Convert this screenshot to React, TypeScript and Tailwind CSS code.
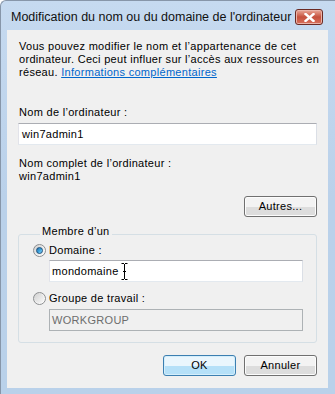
const font = { fontFamily: '"Liberation Sans", Arial, sans-serif' };

function Radio({ checked }: { checked?: boolean }) {
  return (
    <span className="relative flex h-[13px] w-[13px] flex-none items-center justify-center rounded-full border border-[#8c8e90] bg-gradient-to-br from-[#c8c8c8] via-[#f2f2f2] to-[#ffffff]">
      <span className="h-[9px] w-[9px] rounded-full bg-gradient-to-br from-[#d4d4d4] to-[#f8f8f8]">
        {checked && (
          <span className="m-[1px] block h-[7px] w-[7px] rounded-full border border-[#1a4f7c] bg-gradient-to-br from-[#2a6fa6] via-[#3aa3de] to-[#8fdcff]" />
        )}
      </span>
    </span>
  );
}

function Btn({ label, primary }: { label: string; primary?: boolean }) {
  return (
    <button
      type="button"
      className={
        primary
          ? "h-[21px] w-[73px] rounded-[3px] border border-[#3c7fb1] bg-gradient-to-b from-[#eaf6fd] from-50% to-[#b5e0f8] to-50% text-[11px] leading-[13px] tracking-[0.3px] text-black shadow-[inset_0_0_0_1px_#d4eefb]"
          : "h-[21px] w-[73px] rounded-[3px] border border-[#707070] bg-gradient-to-b from-[#f3f3f3] from-50% to-[#dddddd] to-50% text-[11px] leading-[13px] tracking-[0.3px] text-black shadow-[inset_0_0_0_1px_#fcfcfc]"
      }
    >
      {label}
    </button>
  );
}

export default function App() {
  return (
    <div className="h-[394px] w-[335px] overflow-hidden bg-white" style={font}>
      <div className="flex h-full w-full flex-col rounded-tl-[6px] border-l border-t border-[#8796a9] bg-gradient-to-b from-[#c6daf0] via-[#bad1ea] to-[#b9d1ea]">
        {/* title bar */}
        <div className="flex h-[29px] flex-none items-center pl-[10px] pr-[12px] pt-[3px]">
          <span className="text-[12.5px] leading-[15px] text-[#111]">
            Modification du nom ou du domaine de l'ordinateur
          </span>
          <span className="ml-auto flex h-[16px] w-[28px] items-center justify-center rounded-[3px] border border-[#6b2a24] bg-gradient-to-b from-[#e9a99b] via-[#c5503d] to-[#d8705c] shadow-[inset_0_0_0_1px_#eab3a8]">
            <svg width="11" height="9" viewBox="0 0 11 9" aria-hidden="true">
              <path
                d="M1.5 1L9.5 8M9.5 1L1.5 8"
                stroke="#ffffff"
                strokeWidth="2.4"
                strokeLinecap="square"
              />
            </svg>
          </span>
        </div>

        {/* client area */}
        <div className="ml-[6px] mr-[7px] flex h-[358px] flex-none flex-col bg-[#f0f0f0] px-[11px] text-[11px] leading-[13px] tracking-[0.3px] text-black">
          <p className="whitespace-nowrap pl-[1px] pt-[10px]">
            Vous pouvez modifier le nom et l’appartenance de cet
            <br />
            ordinateur. Ceci peut influer sur l’accès aux ressources en
            <br />
            réseau.{" "}
            <a href="#" className="text-[#0066cc] underline">
              Informations complémentaires
            </a>
          </p>

          <div className="mt-[27px] pl-[1px]">Nom de l’ordinateur :</div>
          <div className="mt-[4px] flex h-[22px] items-center border border-[#abadb3] border-b-[#e3e9ef] border-l-[#e2e3ea] border-r-[#dbdfe6] bg-white pl-[3px]">
            win7admin1
          </div>

          <div className="mt-[12px] pl-[1px]">Nom complet de l’ordinateur :</div>
          <div className="pl-[1px]">win7admin1</div>

          <div className="mt-[13px] flex justify-end">
            <Btn label="Autres..." />
          </div>

          <fieldset className="mt-[8px] rounded-[3px] border border-[#d5dfe5] pb-[11px] pl-[14px] pr-[13px]">
            <legend className="ml-[7px] px-[2px] pb-[6px] leading-[13px]">Membre d’un</legend>
            <div className="flex items-center gap-[3px]">
              <Radio checked />
              <span>Domaine :</span>
            </div>
            <div className="relative ml-[16px] mt-[3px] flex h-[22px] items-center border border-[#abadb3] border-b-[#e3e9ef] border-l-[#e2e3ea] border-r-[#dbdfe6] bg-white pl-[2px]">
              mondomaine
              <svg
                className="absolute left-[71px] top-[1px]"
                width="7"
                height="19"
                viewBox="0 0 7 19"
                aria-hidden="true"
              >
                <path d="M0.5 1.5h2.5M4 1.5h2.5M3.5 2v15M0.5 17.5h2.5M4 17.5h2.5M2 9.5h3" stroke="#000" strokeWidth="1" fill="none" />
              </svg>
            </div>
            <div className="mt-[10px] flex items-center gap-[3px]">
              <Radio />
              <span>Groupe de travail :</span>
            </div>
            <div className="ml-[16px] mt-[4px] flex h-[22px] items-center border border-[#adb2b5] bg-[#f0f0f0] pl-[2px] text-[#6d6d6d]">
              WORKGROUP
            </div>
          </fieldset>

          <div className="mt-[12px] flex justify-end gap-[8px]">
            <Btn label="OK" primary />
            <Btn label="Annuler" />
          </div>
        </div>
      </div>
    </div>
  );
}
